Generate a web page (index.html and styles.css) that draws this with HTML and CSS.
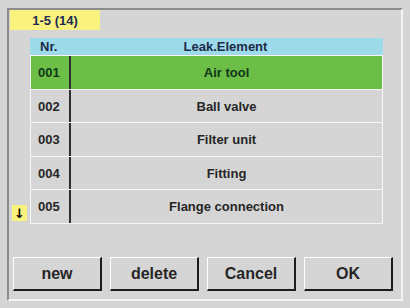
FILE: index.html
```html
<!DOCTYPE html>
<html>
<head>
<meta charset="utf-8">
<link rel="stylesheet" href="styles.css">
</head>
<body>
<div class="screen">
  <div class="frame">
    <div class="page-label">1-5 (14)</div>
    <div class="list-area">
      <div class="gutter">
        <div class="scroll-arrow">↓</div>
      </div>
      <div class="list">
        <div class="list-head">
          <div class="col-nr">Nr.</div>
          <div class="col-name">Leak.Element</div>
        </div>
        <div class="rows">
          <div class="row selected"><div class="col-nr">001</div><div class="col-name">Air tool</div></div>
          <div class="row"><div class="col-nr">002</div><div class="col-name">Ball valve</div></div>
          <div class="row"><div class="col-nr">003</div><div class="col-name">Filter unit</div></div>
          <div class="row"><div class="col-nr">004</div><div class="col-name">Fitting</div></div>
          <div class="row"><div class="col-nr">005</div><div class="col-name">Flange connection</div></div>
        </div>
      </div>
    </div>
    <div class="buttons">
      <div class="btn">new</div>
      <div class="btn">delete</div>
      <div class="btn">Cancel</div>
      <div class="btn">OK</div>
    </div>
  </div>
</div>
</body>
</html>
```
FILE: styles.css
```css
html, body {
  margin: 0;
  padding: 0;
}
body {
  width: 410px;
  height: 308px;
  background: #d5d5d5;
  font-family: "Liberation Sans", Arial, sans-serif;
  font-weight: bold;
  overflow: hidden;
}
.screen {
  padding: 8px 0 0 7px;
}
.frame {
  width: 392px;
  height: 289px;
  border-top: 2px solid #8c8c8c;
  border-left: 2px solid #8c8c8c;
  border-right: 2px solid #f4f4f4;
  border-bottom: 2px solid #f4f4f4;
  display: flex;
  flex-direction: column;
}
.page-label {
  margin-left: 1px;
  width: 90px;
  height: 18px;
  padding-top: 2px;
  background: #faf27e;
  color: #1e2c52;
  font-size: 13px;
  line-height: 18px;
  text-align: center;
}
.list-area {
  display: flex;
  margin-top: 8px;
}
.gutter {
  width: 21px;
  display: flex;
  align-items: flex-end;
}
.scroll-arrow {
  margin: 0 0 3px 3px;
  width: 15px;
  height: 16px;
  background: #faf27e;
  color: #000;
  font-family: "DejaVu Sans", sans-serif;
  font-size: 13px;
  font-weight: bold;
  line-height: 17px;
  text-align: center;
}
.list {
  width: 353px;
}
.list-head {
  display: flex;
  height: 17px;
  background: #9ddbea;
  color: #1c2b48;
  font-size: 13px;
  line-height: 18px;
}
.list-head .col-nr {
  width: 30px;
  padding-left: 10px;
}
.list-head .col-name {
  flex: 1;
  text-align: center;
  padding-right: 2px;
}
.rows {
  background: #f6f6f6;
  padding: 1px;
  display: flex;
  flex-direction: column;
  gap: 1px;
  width: 351px;
}
.row {
  display: flex;
  height: 32.6px;
  align-items: stretch;
  background: #d5d5d5;
  color: #262626;
  font-size: 13px;
}
.row.selected {
  background: #6cbe46;
  color: #10381a;
}
.row .col-nr {
  width: 31px;
  padding-left: 7px;
  border-right: 2px solid #2e2e2e;
  line-height: 33px;
}
.row .col-name {
  flex: 1;
  text-align: center;
  line-height: 33px;
}
.buttons {
  display: flex;
  gap: 8px;
  margin: 33px 0 0 4px;
}
.btn {
  width: 86px;
  height: 31px;
  border-top: 1px solid #ffffff;
  border-left: 1px solid #ffffff;
  border-right: 2px solid #1c1c1c;
  border-bottom: 2px solid #1c1c1c;
  background: #d5d5d5;
  color: #262626;
  font-size: 16px;
  line-height: 32px;
  text-align: center;
}
```
